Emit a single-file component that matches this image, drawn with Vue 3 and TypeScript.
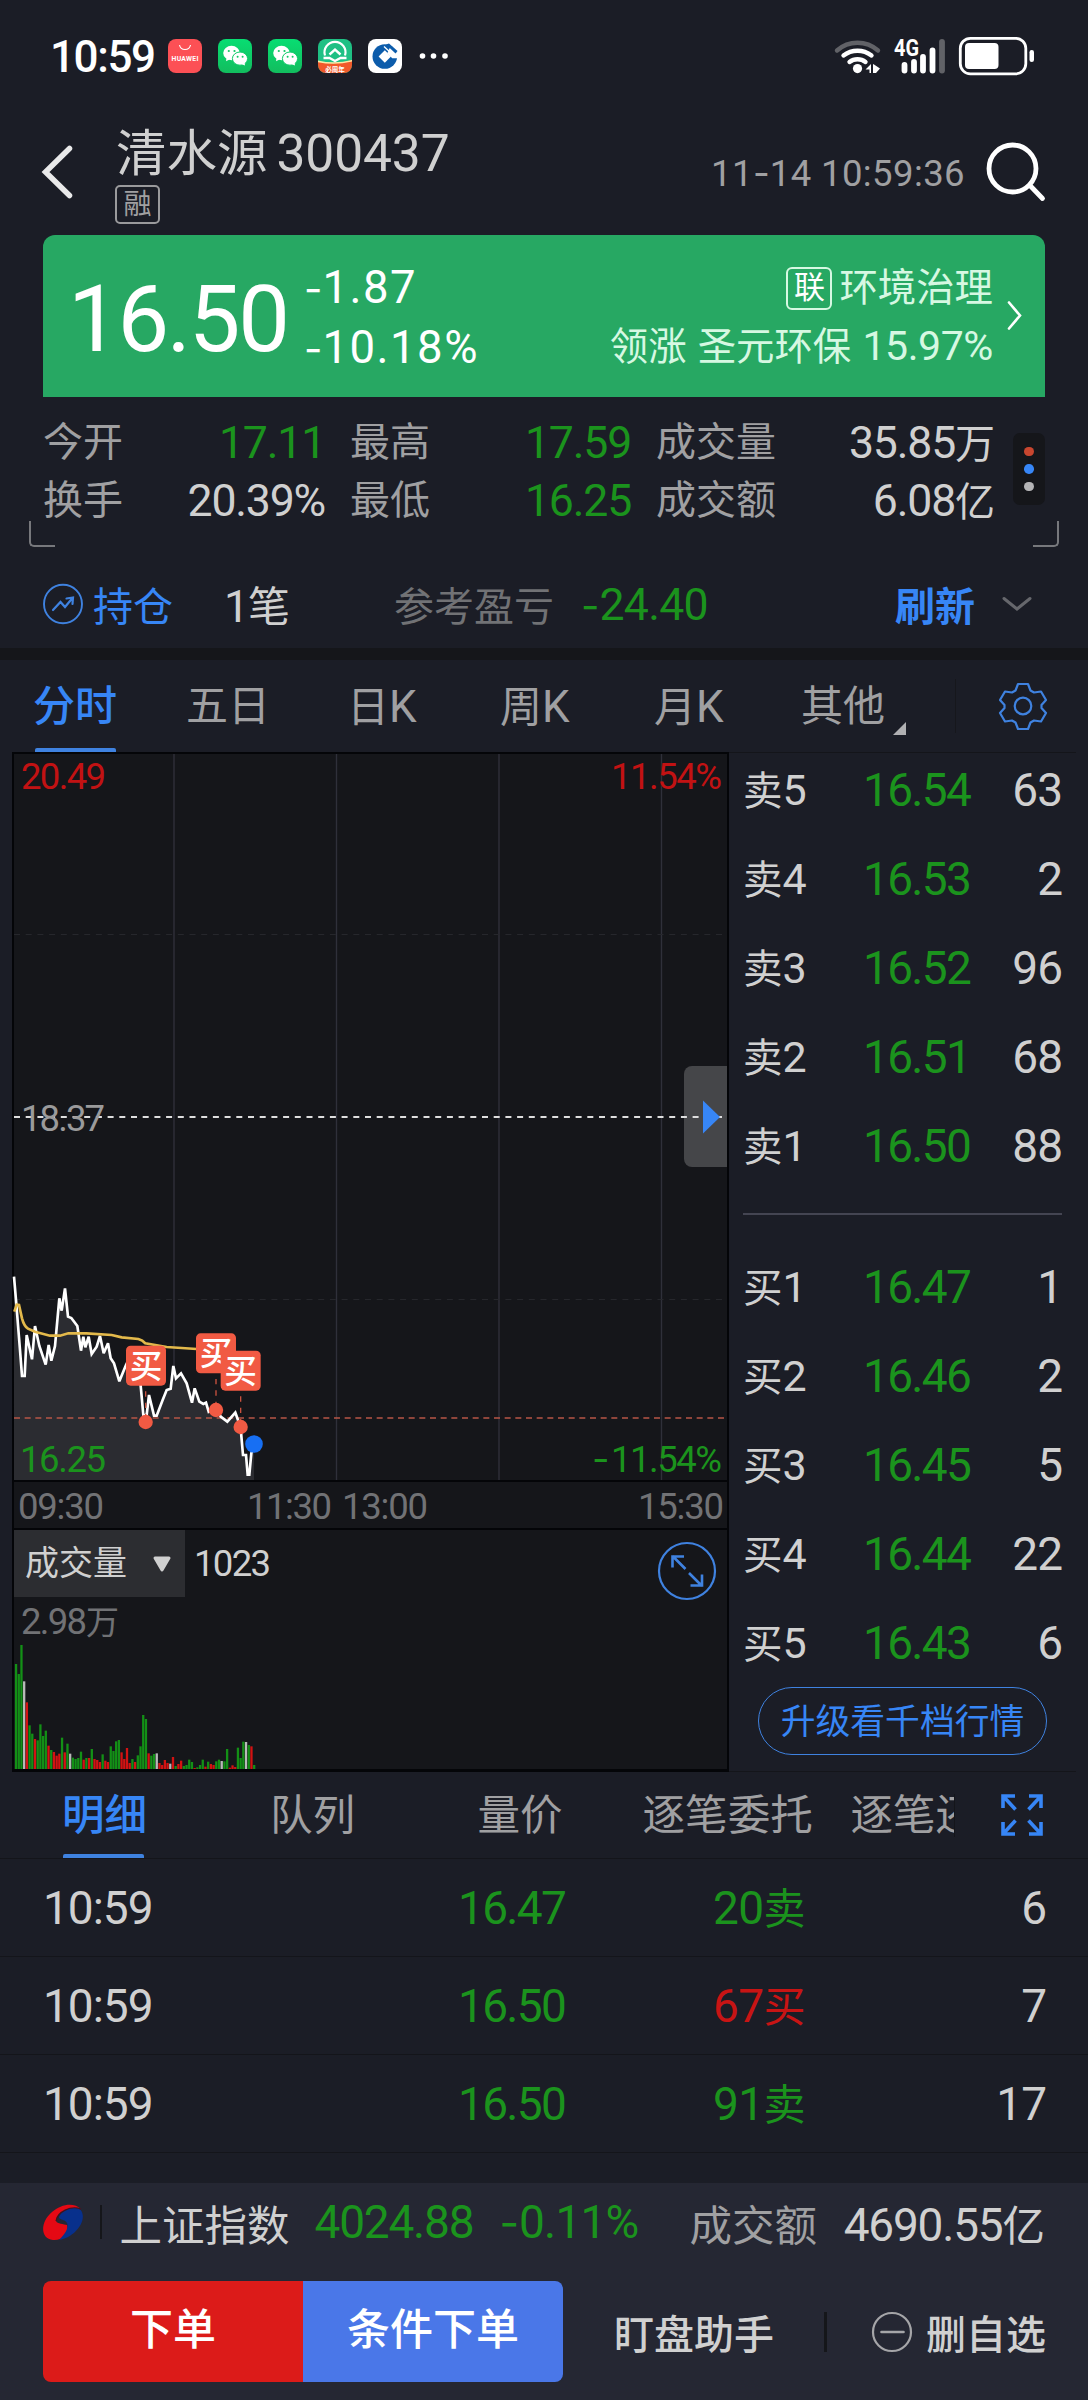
<script setup lang="ts">
import { computed, h, type FunctionalComponent } from 'vue'

type Tone = 'green' | 'red' | 'white'

/* Splits a label so that digits, dashes and Chinese characters can be sized separately. */
const Txt: FunctionalComponent<{ t: string }> = (props) =>
  h(
    'span',
    { class: 'txt' },
    (props.t.match(/-|[0-9A-Za-z.:%]+|\s+|[^0-9A-Za-z.:%\s-]+/g) ?? []).map((part) =>
      part === '-'
        ? h('span', { class: 'dash' }, part)
        : /[0-9A-Za-z]/.test(part)
          ? h('span', { class: 'num' }, part)
          : part,
    ),
  )
Txt.props = ['t']

const stats: { label: string; value: string; tone: Tone }[] = [
  { label: '今开', value: '17.11', tone: 'green' },
  { label: '最高', value: '17.59', tone: 'green' },
  { label: '成交量', value: '35.85万', tone: 'white' },
  { label: '换手', value: '20.39%', tone: 'white' },
  { label: '最低', value: '16.25', tone: 'green' },
  { label: '成交额', value: '6.08亿', tone: 'white' },
]

const periods = ['分时', '五日', '日K', '周K', '月K', '其他']

const asks = [
  ['卖5', '16.54', '63'],
  ['卖4', '16.53', '2'],
  ['卖3', '16.52', '96'],
  ['卖2', '16.51', '68'],
  ['卖1', '16.50', '88'],
]
const bids = [
  ['买1', '16.47', '1'],
  ['买2', '16.46', '2'],
  ['买3', '16.45', '5'],
  ['买4', '16.44', '22'],
  ['买5', '16.43', '6'],
]

const detailTabs = ['明细', '队列', '量价', '逐笔委托', '逐笔还原']
const ticks: { time: string; price: string; vol: string; tone: Tone; count: string }[] = [
  { time: '10:59', price: '16.47', vol: '20卖', tone: 'green', count: '6' },
  { time: '10:59', price: '16.50', vol: '67买', tone: 'red', count: '7' },
  { time: '10:59', price: '16.50', vol: '91卖', tone: 'green', count: '17' },
]

const priceLine =
  '42,110 48,180 60,330 66,408 74,408 80,285 96,358 105,258 118,318 137,374 146,315 154,362 165,318 178,175 185,212 195,145 204,230 214,234 232,258 243,332 250,290 256,322 266,290 275,342 290,320 300,288 311,340 324,310 332,355 342,370 358,424 378,375 395,340 412,370 422,437 430,525 440,525 447,465 462,527 470,527 488,480 500,450 512,446 520,378 528,415 543,400 560,430 576,488 584,445 598,485 610,492 618,488 626,515 648,500 662,530 682,545 706,518 714,540 722,565 729,645 738,645 743,704 748,704 754,640 762,612'

const marks = [
  { x: 378, y: 317, cx: 437, cy: 546 },
  { x: 588, y: 280, cx: 648, cy: 510 },
  { x: 662, y: 332, cx: 722, cy: 561 },
]

const volumeData =
  'g315 g285 g372 w263 r200 g131 g106 r90 g86 g134 g99 g115 r70 g57 r51 r40 r46 g94 r50 g76 w46 g34 g30 g33 g52 r28 g33 r33 g60 r30 r27 r21 g44 r25 r21 g68 g54 g83 g87 r50 r30 r63 r18 g30 r21 g41 g68 g162 g150 r47 g40 g45 w47 r18 r12 r27 r18 w16 r36 g9 r15 r25 g9 g12 g28 g21 r3 g5 g12 g28 r7 g22 r15 r12 g23 g28 w24 g23 g60 r4 r11 r6 g64 g33 g82 w81 g72 r68 g12'
const barColors: Record<string, string> = { g: '#139016', r: '#d31212', w: '#b9b9b9' }
const bars = computed(() =>
  volumeData.split(' ').map((d, i) => ({
    x: 14.9 + i * 2.706,
    h: Number(d.slice(1)) / 3,
    fill: barColors[d[0]],
  })),
)
</script>

<template>
  <div class="screen">
    <div class="status">
      <Txt t="10:59" class="clock" />
      <svg class="apps" width="290" height="40" viewBox="162 36 290 40">
        <defs>
          <linearGradient id="wg" x1="0" y1="0" x2="0" y2="1">
            <stop offset="0" stop-color="#08dd72" />
            <stop offset="1" stop-color="#12bd5e" />
          </linearGradient>
          <g id="wechat">
            <rect width="34" height="34" rx="8" fill="url(#wg)" />
            <ellipse cx="13.5" cy="14" rx="8.3" ry="7.2" fill="#fff" />
            <path d="M8.5 18.5 8 22.2l4-2z" fill="#fff" />
            <ellipse cx="22" cy="19.6" rx="7.6" ry="6.6" fill="#fff" stroke="#0fcb67" stroke-width="1" />
            <path d="m23 25 4 1.6-.4-3.4z" fill="#fff" />
            <circle cx="10.8" cy="12" r="1.1" fill="#11c863" />
            <circle cx="16.5" cy="12" r="1.1" fill="#11c863" />
            <circle cx="19.6" cy="17.8" r="1" fill="#11c863" />
            <circle cx="24.6" cy="17.8" r="1" fill="#11c863" />
          </g>
        </defs>
        <rect x="168" y="39" width="34" height="34" rx="8" fill="#fc5055" />
        <path d="M179.5 45a5.6 5.6 0 0 0 11 0" fill="none" stroke="#fff" stroke-width="1.1" />
        <text x="185" y="61" text-anchor="middle" font-size="6.8" font-weight="700" fill="#fff" textLength="27">HUAWEI</text>
        <use href="#wechat" x="218" y="39" />
        <use href="#wechat" x="268" y="39" />
        <clipPath id="leaf"><rect x="318" y="39" width="34" height="34" rx="8" /></clipPath>
        <g clip-path="url(#leaf)">
          <rect x="318" y="39" width="34" height="34" fill="#1fc084" />
          <path d="M318 61.500q17 4 34-1.500v14h-34z" fill="#f2592a" />
          <path d="M318 60.500q17 4 34-.6v1.500q-17 4.500-34 .8z" fill="#fbe9a8" />
          <path d="M325 55.500a10.500 10.500 0 1 1 20 0" fill="none" stroke="#fff" stroke-width="2.200" />
          <path d="M329.500 54.500 335 49.500l5.500 5M323.500 58h6l5.500 3 5.500-3h6" fill="none" stroke="#fff" stroke-width="2.400" />
          <text x="335" y="71.500" text-anchor="middle" font-size="6.500" font-weight="700" fill="#fff">必周年</text>
        </g>
        <rect x="368" y="39" width="34" height="34" rx="8" fill="#fff" />
        <circle cx="384.800" cy="56.500" r="12.300" fill="#0c5cab" />
        <path d="m384.800 50.300 6.200 6.200-6.200 6.200-6.200-6.200z" fill="#fff" />
        <path d="m388 53 4.500 4.500h5.500v-2.500L391 47zM387 42.500l12 11M384 46.500l9 8.500" fill="#fff" stroke="#fff" stroke-width="1.300" />
        <path d="m389 43.500 8.500 7.500-2 2.500-9.500-9z" fill="#0c5cab" />
        <circle v-for="x in [422.500, 433.500, 445]" :key="x" :cx="x" cy="56" r="2.800" fill="#fff" />
      </svg>
      <svg class="signals" width="206" height="44" viewBox="832 34 206 44" fill="none">
        <g stroke="#fff" stroke-width="4.400" stroke-linecap="round">
          <path d="M837 50.500a31 31 0 0 1 41 0" stroke="#616267" />
          <path d="M843.500 55.500a23 23 0 0 1 28 0" />
          <path d="M849.500 62a13 13 0 0 1 16 0" />
        </g>
        <circle cx="857.500" cy="68.600" r="4.600" fill="#fff" />
        <path d="M871 64v9h-1.500v-3.500h-4zM874 64.500l6 4-4 4.500h-3v-9z" fill="#fff" />
        <text x="894" y="55.500" font-size="23" font-weight="700" fill="#fff" textLength="25" lengthAdjust="spacingAndGlyphs">4G</text>
        <g stroke="#fff" stroke-width="5.800" stroke-linecap="round">
          <path d="M904.500 65v5.500M914 62v8.500M923 57v13.500M932.500 50.500v20" />
          <path d="M942 42v28.500" stroke="#616267" />
        </g>
        <rect x="960.300" y="38.300" width="65.500" height="35.500" rx="10" stroke="#fff" stroke-width="2.800" />
        <rect x="965" y="43" width="33.500" height="26" rx="4" fill="#fff" />
        <rect x="1029.500" y="50" width="4.500" height="12" rx="2.200" fill="#fff" />
      </svg>
    </div>

    <div class="header">
      <svg class="back" width="36" height="60" viewBox="40 142 36 60">
        <path d="M69.500 148.500 45.500 172l24 23.500" fill="none" stroke="#e9e9ea" stroke-width="5.500" stroke-linecap="round" />
      </svg>
      <div class="name">
        <div class="title"><span>清水源</span><span class="code">300437</span></div>
        <div class="tag">融</div>
      </div>
      <Txt t="11-14 10:59:36" class="date" />
      <svg class="search" width="62" height="62" viewBox="985 140 62 62">
        <circle cx="1012.500" cy="168.500" r="23.500" fill="none" stroke="#fff" stroke-width="4.800" />
        <path d="M1030 185.500 1042.500 198.500" stroke="#fff" stroke-width="4.800" stroke-linecap="round" />
      </svg>
    </div>

    <div class="quote">
      <div class="last">16.50</div>
      <div class="change"><Txt t="-1.87" /><Txt t="-10.18%" /></div>
      <div class="sector">
        <div><span class="link">联</span>环境治理</div>
        <div><Txt t="领涨 圣元环保 15.97%" /></div>
      </div>
      <svg width="20" height="36" viewBox="1005 298 20 36">
        <path d="m1009 302.500 11 13-11 13" fill="none" stroke="#fff" stroke-width="2.600" stroke-linecap="round" />
      </svg>
    </div>

    <div class="stats">
      <div class="grid">
        <template v-for="s in stats" :key="s.label">
          <span class="label">{{ s.label }}</span>
          <Txt :t="s.value" class="value" :class="s.tone" />
        </template>
      </div>
      <div class="dots"><i /><i /><i /></div>
      <div class="corner left" />
      <div class="corner right" />
    </div>

    <div class="position">
      <svg width="42" height="44" viewBox="42 582 42 44" fill="none" stroke="#3f82e0">
        <ellipse cx="63" cy="604" rx="19" ry="19.300" stroke-width="1.900" />
        <path d="m53 610 7.500-8 4.500 5 7.500-9M66.500 598.500l6.500-1-.5 6.500" stroke-width="2.200" stroke-linecap="round" />
      </svg>
      <span class="hold">持仓</span>
      <Txt t="1笔" class="lots" />
      <span class="pl">参考盈亏</span>
      <Txt t="-24.40" class="green plv" />
      <span class="refresh">刷新</span>
      <svg class="down" width="34" height="20" viewBox="1000 596 34 20">
        <path d="m1004 600.500 13 10.500 13-10.500" fill="none" stroke="#66676c" stroke-width="3" stroke-linecap="round" />
      </svg>
    </div>

    <div class="periods">
      <div v-for="(p, i) in periods" :key="p" class="period" :class="{ active: i === 0 }">
        <Txt :t="p" />
        <i v-if="i === 5" class="more" />
      </div>
      <div class="gear">
        <svg width="54" height="54" viewBox="-27 -27 54 54" fill="none" stroke="#3f82e0" stroke-width="2.200" stroke-linejoin="round">
          <path d="M-5-22h10l2.500 6.500 3.500 2 7-1 5 8.500-4.500 5v3l4.500 5-5 8.500-7-1-3.500 2-2.500 6.500h-10l-2.500-6.500-3.500-2-7 1-5-8.500 4.500-5v-3l-4.500-5 5-8.500 7 1 3.500-2z" />
          <circle r="8.300" />
        </svg>
      </div>
    </div>

    <div class="market">
      <svg class="chart" width="717" height="1020" viewBox="12 752 717 1020">
        <rect x="12" y="752" width="717" height="1020" fill="#040508" />
        <rect x="14" y="754" width="713" height="726" fill="#15161a" />
        <rect x="14" y="1482" width="713" height="46" fill="#15161a" />
        <rect x="14" y="1530" width="713" height="239" fill="#15161a" />
        <path d="M174 754v726M336.500 754v726M499 754v726M661.500 754v726" stroke="#2f303a" stroke-width="1.400" />
        <path d="M14 934.500h713M14 1299.500h713" stroke="#26272c" stroke-dasharray="6 5.700" />
        <g transform="translate(0 1240) scale(.33333)">
          <polygon :points="`${priceLine} 762,720 42,720`" fill="#2b2c31" />
          <path d="M42 534h2139" stroke="#b75547" stroke-width="4.500" stroke-dasharray="18 14" />
          <polyline :points="priceLine" fill="none" stroke="#fff" stroke-width="8" stroke-linejoin="miter" stroke-miterlimit="3" />
          <path d="M43 215 50 194 57 195 66 235Q72 258 84 266L105 275 150 287 180 287 205 280 260 280 335 285 365 292 415 297Q428 300 436 310L500 321 590 327" fill="none" stroke="#e3b94b" stroke-width="8" />
          <g v-for="m in marks" :key="m.x">
            <path :d="`M${m.cx} ${m.y + 137}V${m.cy}`" stroke="#c9523f" stroke-width="4" stroke-dasharray="16 18" />
            <circle :cx="m.cx" :cy="m.cy" r="21.500" fill="#f15a43" />
            <rect :x="m.x" :y="m.y" width="120" height="120" rx="14" fill="#f15a43" />
            <text :x="m.x + 60" :y="m.y + 96" font-size="98" font-weight="500" text-anchor="middle" fill="#fff">买</text>
          </g>
          <circle cx="762" cy="612" r="26.500" fill="#176ff3" />
        </g>
        <rect x="684" y="1066" width="60" height="101" rx="8" fill="#454649" />
        <path d="M14 1117h713" stroke="#dedede" stroke-width="2" stroke-dasharray="6 5.700" />
        <path d="M727 752h2v1020h-2z" fill="#040508" />
        <path d="M703 1100.500 720 1117l-17 16.500z" fill="#3786f6" />
        <g font-size="36.500">
          <text x="21" y="789" fill="#c21213" textLength="85">20.49</text>
          <text x="611" y="789" fill="#c21213" textLength="111">11.54%</text>
          <text x="21" y="1131" fill="#9a9a9b" textLength="84">18.37</text>
          <text x="20" y="1472" fill="#1b931d" textLength="86">16.25</text>
          <text x="592" y="1472" fill="#1b931d" class="dash" font-size="38">-</text>
          <text x="611" y="1472" fill="#1b931d" textLength="111">11.54%</text>
          <g fill="#717275">
            <text x="18" y="1519" textLength="86">09:30</text>
            <text x="247" y="1519" textLength="85">11:30</text>
            <text x="342" y="1519" textLength="86">13:00</text>
            <text x="638" y="1519" textLength="86">15:30</text>
            <text x="21" y="1634" textLength="66">2.98</text>
            <text x="86" y="1634" font-size="33">万</text>
          </g>
          <rect x="14" y="1530" width="171" height="67" fill="#2c2d31" />
          <text x="25" y="1575" fill="#d0d0d0" font-size="34">成交量</text>
          <path d="M155 1558h14l-7 12z" fill="#d0d0d0" stroke="#d0d0d0" stroke-width="3" stroke-linejoin="round" />
          <text x="194" y="1576" fill="#d0d0d0" textLength="77">1023</text>
        </g>
        <g fill="none" stroke="#3f82e0">
          <ellipse cx="687" cy="1571" rx="28" ry="28" stroke-width="2.200" />
          <path d="M685.500 1569 672.500 1556M684 1556.500h-11.500v11M689 1573l13 13M690.500 1585.500h11.500v-11" stroke-width="2.600" />
        </g>
        <rect v-for="b in bars" :key="b.x" :x="b.x" :y="1769 - b.h" width="2.300" :height="b.h" :fill="b.fill" />
      </svg>

      <div class="book">
        <div v-for="r in asks" :key="r[0]" class="level">
          <Txt :t="r[0]" /><span class="price">{{ r[1] }}</span><span class="qty">{{ r[2] }}</span>
        </div>
        <div class="split" />
        <div v-for="r in bids" :key="r[0]" class="level">
          <Txt :t="r[0]" /><span class="price">{{ r[1] }}</span><span class="qty">{{ r[2] }}</span>
        </div>
        <div class="upgrade">升级看千档行情</div>
      </div>
    </div>

    <div class="dtabs">
      <div v-for="(t, i) in detailTabs" :key="t" class="dtab" :class="{ active: i === 0, clipped: i === 4 }">
        <span>{{ t }}</span>
      </div>
      <svg width="42" height="42" viewBox="0 0 42 42" fill="none" stroke="#3786f6" stroke-width="3.600">
        <path d="M14 2H2v12M2 2l12.500 13.500M28 2h12v12M40 2 27.500 15.500M14 40H2V28M2 40l12.500-13.500M28 40h12V28M40 40 27.500 26.500" />
      </svg>
    </div>

    <div v-for="(t, i) in ticks" :key="i" class="tick">
      <Txt :t="t.time" class="time" />
      <Txt :t="t.price" class="green" />
      <Txt :t="t.vol" class="vol" :class="t.tone" />
      <Txt :t="t.count" class="count" />
    </div>

    <div class="footer">
      <div class="index">
        <svg width="40" height="37" viewBox="0 0 40 37">
          <path d="M38 5C31-2 18 0 9 8-3 18-3 35 10 36c10 1 16-7 14-15-3-1-10-1-11-4C13 9 27 1 38 5z" fill="#e50914" />
          <path d="M37 5.500C28 1 18 7 16 13c0 3 6 2 8 6 2 5-2 11-8 17C30 34 42 20 39.500 10 39 8 38.500 6.500 37 5.500z" fill="#08308c" />
          <path d="M38 5C28 1 14 8 13 17" fill="none" stroke="#40131f" stroke-width="1.200" />
        </svg>
        <i />
        <span class="iname">上证指数</span>
        <Txt t="4024.88" class="green ival" />
        <Txt t="-0.11%" class="green ichg" />
        <span class="label">成交额</span>
        <Txt t="4690.55亿" class="amount" />
      </div>
      <div class="actions">
        <div class="order">下单</div>
        <div class="cond">条件下单</div>
        <div class="watch">盯盘助手</div>
        <i />
        <svg width="42" height="42" viewBox="0 0 42 42" fill="none" stroke="#a5a5a8">
          <ellipse cx="21" cy="21" rx="19" ry="19" stroke-width="2.200" />
          <path d="M10.500 21h22" stroke-width="2.600" stroke-linecap="round" />
        </svg>
        <div class="remove">删自选</div>
      </div>
    </div>
  </div>
</template>

<style>
body {
  background: #1b1d26;
}
.txt {
  white-space: pre;
}
.txt .num {
  font-size: var(--n, 44.6px);
  letter-spacing: var(--ls, -1.2px);
}
.dash {
  font-family: Inter, Roboto, sans-serif;
  letter-spacing: 0;
}
</style>

<style scoped>
.screen {
  width: 1088px;
  height: 2400px;
  overflow: hidden;
  background: #1b1d26;
  color: #d0d0d0;
  font-family: Roboto, 'Noto Sans CJK SC', sans-serif;
  font-size: 40px;
  display: flex;
  flex-direction: column;
  white-space: nowrap;
}
.screen > * {
  flex-shrink: 0;
  box-sizing: border-box;
}
.green {
  color: #1b931d;
}
.red {
  color: #c81414;
}
.white {
  color: #d0d0d0;
}
.label {
  color: #a0a0a2;
}
.status {
  height: 112px;
  display: flex;
  align-items: center;
  padding-left: 50px;
}
.clock {
  --n: 44px;
  --ls: -1.4px;
  width: 112px;
  padding-top: 2px;
  font-weight: 500;
  color: #fff;
}
.signals {
  margin-left: 380px;
}
.header {
  height: 123px;
  display: flex;
  padding-left: 40px;
}
.back {
  margin-top: 30px;
}
.name {
  margin-left: 40px;
  width: 589px;
}
.title {
  margin-top: 12px;
  height: 60px;
  line-height: 60px;
  font-size: 50.5px;
}
.code {
  margin-left: 9px;
  font-size: 51.5px;
  letter-spacing: -0.1px;
}
.tag {
  margin: 1px 0 0 -1px;
  width: 41px;
  height: 35px;
  line-height: 36px;
  text-align: center;
  border: 2px solid #9a9a9c;
  border-radius: 5px;
  font-size: 28px;
  color: #a0a0a2;
}
.date {
  --n: 36.5px;
  --ls: 0.4px;
  margin-top: 30px;
  width: 260px;
  height: 62px;
  line-height: 62px;
  text-align: right;
  font-size: 36.5px;
  color: #a0a0a2;
  letter-spacing: 0.4px;
}
.search {
  margin: 28px 0 0 20px;
}
.quote {
  margin: 0 43px;
  height: 162px;
  border-radius: 12px 12px 0 0;
  background: #27a863;
  color: #fff;
  display: flex;
  align-items: center;
}
.last {
  width: 233px;
  box-sizing: border-box;
  padding: 7px 0 0 25px;
  font-size: 92px;
  line-height: 155px;
  letter-spacing: -2.3px;
}
.change {
  --n: 45.5px;
  --ls: 1.5px;
  display: flex;
  flex-direction: column;
  line-height: 58px;
  width: 200px;
  margin-left: 28px;
  padding-top: 6px;
}
.sector {
  flex: 1;
  text-align: right;
  font-size: 38.4px;
  line-height: 58px;
  color: #d6f8e2;
  --n: 41px;
  --ls: -0.4px;
  margin-right: 12px;
  padding-top: 2px;
  word-spacing: 1.6px;
}
.sector > div {
  display: flex;
  justify-content: flex-end;
  align-items: center;
  height: 58px;
}
.link {
  width: 42px;
  height: 39px;
  line-height: 38px;
  border: 2px solid #d6f8e2;
  border-radius: 6px;
  font-size: 31px;
  text-align: center;
  color: #fff;
  margin-right: 7px;
}
.quote svg {
  margin-right: 20px;
}
.stats {
  height: 152px;
  padding: 17px 43px 0;
  display: flex;
  position: relative;
}
.grid {
  width: 952px;
  display: grid;
  grid-template-columns: 120px 187px 100px 206px 140px 199px;
  grid-auto-rows: 58px;
  line-height: 58px;
}
.value {
  text-align: right;
  padding-right: 25px;
}
.value:nth-child(6n) {
  padding-right: 0;
}
.dots {
  margin: 19px 0 0 18px;
  width: 32px;
  height: 72px;
  border-radius: 7px;
  background: #15161a;
  display: flex;
  flex-direction: column;
  align-items: center;
  justify-content: center;
  gap: 8px;
}
.dots i {
  width: 9.5px;
  height: 9.5px;
  border-radius: 50%;
  background: #c8462f;
}
.dots i:nth-child(2) {
  background: #3786f6;
}
.dots i:nth-child(3) {
  background: #b4b4b6;
}
.corner {
  position: absolute;
  bottom: 2px;
  width: 24px;
  height: 24px;
  border-bottom: 2.5px solid #77787c;
}
.corner.left {
  left: 29px;
  border-left: 2.5px solid #77787c;
  border-bottom-left-radius: 5px;
}
.corner.right {
  right: 29px;
  border-right: 2.5px solid #77787c;
  border-bottom-right-radius: 5px;
}
.position {
  height: 111px;
  padding-left: 42px;
  padding-bottom: 2px;
  padding-top: 12px;
  display: flex;
  align-items: center;
  border-bottom: 12px solid #15161a;
  box-sizing: border-box;
}
.hold {
  margin-left: 9px;
  width: 131px;
  color: #3786f6;
}
.lots {
  width: 170px;
  font-size: 42px;
}
.pl {
  width: 187px;
  color: #717275;
}
.plv {
  --ls: -0.7px;
  width: 314px;
  padding-top: 3px;
}
.refresh {
  width: 105px;
  font-weight: 700;
  color: #3786f6;
}
.periods {
  height: 92px;
  padding-left: 33px;
  display: grid;
  grid-template-columns: 153px 161px 153px 154px 147px 154px 1fr;
  font-size: 42px;
  line-height: 94px;
  color: #a0a0a2;
}
.period {
  display: flex;
  height: 92px;
  --n: 44px;
  position: relative;
}
.active {
  color: #3786f6;
  font-weight: 500;
}
.period.active::after,
.dtab.active::after {
  content: '';
  position: absolute;
  left: 2px;
  bottom: 0;
  width: 81px;
  height: 4px;
  border-radius: 2px 2px 0 0;
  background: #3f82e0;
}
.dtab.active::after {
  left: 1px;
}
.more {
  align-self: flex-end;
  margin: 0 0 17px 8px;
  border-left: 13px solid transparent;
  border-bottom: 13px solid #b0b0b2;
}
.gear {
  margin-top: 19px;
  height: 54px;
  padding-left: 40px;
  border-left: 1px solid #16171c;
}
.gear svg {
  display: block;
}
.market {
  height: 1020px;
  padding-left: 12px;
  display: flex;
}
.chart {
  display: block;
  font-family: Roboto, 'Noto Sans CJK SC', sans-serif;
}
.book {
  width: 319px;
  padding-left: 14px;
  margin-right: 12px;
  padding-right: 14px;
  border-top: 1px solid #14151a;
  border-bottom: 1px solid #14151a;
  box-sizing: content-box;
  height: 1018px;
  --n: 43px;
  font-size: 39.5px;
}
.level {
  height: 89px;
  line-height: 89px;
  display: grid;
  grid-template-columns: 120px 120px 1fr;
  font-size: 39.5px;
}
.level:first-child {
  margin-top: -7px;
}
.price {
  font-size: 46px;
  letter-spacing: -1.7px;
  color: #1b931d;
}
.qty {
  font-size: 46px;
  letter-spacing: -1px;
  text-align: right;
}
.split {
  height: 2px;
  background: #444552;
  margin: 22px 0 28px;
}
.upgrade {
  margin: -1px 0 0 15px;
  width: 287px;
  height: 66px;
  line-height: 69px;
  border: 1.5px solid #3f82e0;
  border-radius: 34px;
  text-align: center;
  font-size: 34.8px;
  color: #3786f6;
}
.dtabs {
  height: 87px;
  display: grid;
  grid-template-columns: 208px 207.5px 165px 208px 104px 46px 1fr;
  padding-left: 62px;
  font-size: 42.6px;
  line-height: 87px;
  color: #a0a0a2;
  border-bottom: 1px solid #14151a;
}
.dtab {
  position: relative;
  height: 86px;
}
.dtab.clipped {
  overflow: hidden;
  height: 43px;
  line-height: 43px;
  margin-top: 22px;
  border-right: 1px solid #14151a;
}
.dtabs svg {
  grid-column: 7;
  margin-top: 22px;
}
.tick {
  height: 98px;
  border-bottom: 1px solid #14151a;
  display: grid;
  grid-template-columns: 415px 255px 200px 1fr;
  padding: 0 42px 0 43px;
  line-height: 98px;
  font-size: 42px;
  --n: 46px;
  --ls: -1.7px;
}
.time {
  --ls: -1px;
}
.vol {
  --ls: -0.6px;
}
.count {
  --ls: -1px;
  text-align: right;
}
.footer {
  margin-top: 30px;
  height: 220px;
  padding: 0 43px;
  background: #252733;
}
.index {
  height: 98px;
  padding-bottom: 20px;
  box-sizing: border-box;
  display: flex;
  align-items: center;
  font-size: 42.5px;
  --n: 46px;
}
.index i {
  width: 1.5px;
  height: 34px;
  margin: 0 18px 0 17px;
  background: #15161a;
}
.iname {
  width: 195px;
}
.ival {
  width: 185px;
}
.ichg {
  --ls: -0.8px;
  width: 190px;
}
.amount {
  margin-left: auto;
}
.actions {
  height: 101px;
  display: flex;
  align-items: center;
  font-size: 40px;
  font-weight: 500;
}
.order,
.cond {
  width: 260px;
  height: 101px;
  line-height: 99px;
  text-align: center;
  font-size: 43px;
  color: #fff;
  background: #dc1b19;
  border-radius: 8px 0 0 8px;
}
.cond {
  background: #4a77e8;
  border-radius: 0 8px 8px 0;
}
.watch {
  margin-left: 51px;
  width: 210px;
}
.actions i {
  width: 3px;
  height: 40px;
  background: #15161a;
  margin-right: 44px;
}
.remove {
  margin: 0 -1px 0 auto;
}
</style>
